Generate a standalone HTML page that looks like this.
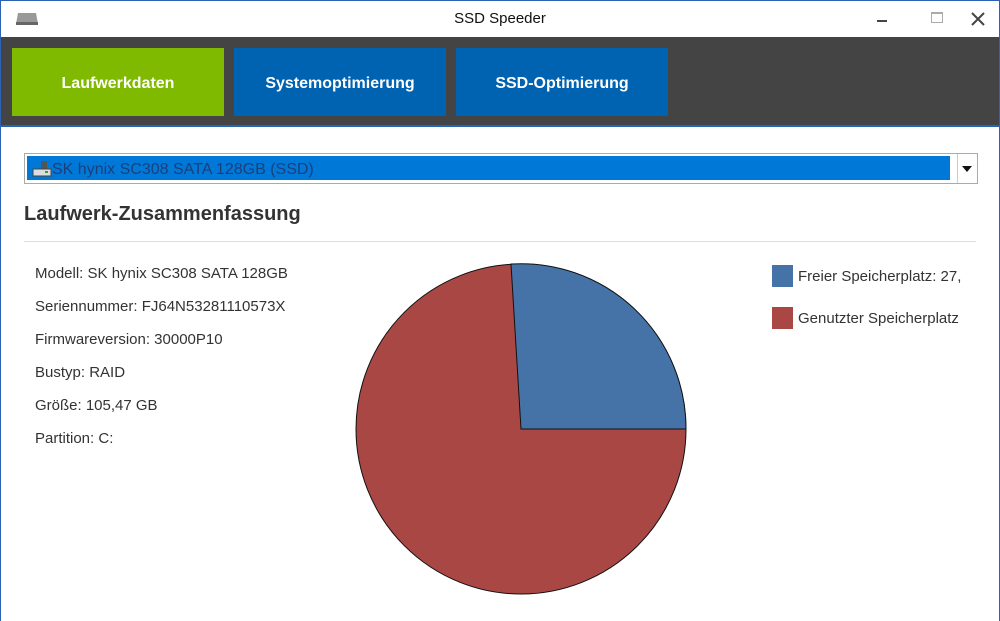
<!DOCTYPE html>
<html><head><meta charset="utf-8"><style>
*{margin:0;padding:0;box-sizing:border-box}
body{width:1000px;height:621px;overflow:hidden;background:#fff;font-family:"Liberation Sans",sans-serif;position:relative}
.frame{position:absolute;inset:0;border:1px solid #2b62b5;border-bottom:none}
.title{position:absolute;left:0;top:0;width:1000px;height:37px;text-align:center;line-height:37px;font-size:15px;color:#111}
.band{position:absolute;left:1px;top:37px;width:998px;height:90px;background:#444;border-bottom:2px solid #2466b4}
.btn{position:absolute;top:11px;height:68px;color:#fff;font-weight:bold;font-size:16px;text-align:center;line-height:72px}
.t{position:absolute;font-size:15px;color:#333;white-space:nowrap}
</style></head><body>
<div class="frame"></div>
<div class="title">SSD Speeder</div>
<svg style="position:absolute;left:15px;top:12px" width="24" height="14"><path d="M3 1h18l2 11H1z" fill="#999"/><rect x="1" y="10" width="22" height="3" fill="#666"/></svg>
<div style="position:absolute;left:877px;top:20px;width:10px;height:1.5px;background:#444"></div>
<div style="position:absolute;left:931px;top:12px;width:12px;height:11px;border:1px solid #aaa;border-top-width:2px"></div>
<svg style="position:absolute;left:971px;top:12px" width="14" height="14"><path d="M1 1L13 13M13 1L1 13" stroke="#444" stroke-width="2"/></svg>
<div class="band">
<div class="btn" style="left:11px;width:212px;background:#7fba00">Laufwerkdaten</div>
<div class="btn" style="left:233px;width:212px;background:#0063b1">Systemoptimierung</div>
<div class="btn" style="left:455px;width:212px;background:#0063b1">SSD-Optimierung</div>
</div>
<div style="position:absolute;left:24px;top:153px;width:954px;height:31px;border:1px solid #aaa;background:#fff"></div>
<div style="position:absolute;left:27px;top:156px;width:923px;height:24px;background:#0078d7"></div>
<div style="position:absolute;left:957px;top:154px;width:1px;height:29px;background:#ccc"></div>
<svg style="position:absolute;left:962px;top:166px" width="10" height="6"><path d="M0 0h10L5 6z" fill="#111"/></svg>
<svg style="position:absolute;left:31px;top:159px" width="22" height="20"><rect x="10" y="2" width="6" height="8" fill="#555"/><rect x="2" y="10" width="18" height="7" fill="#ddd" stroke="#444"/><rect x="14" y="12" width="3" height="2" fill="#2a2"/></svg>
<div class="t" style="left:52px;top:161px;color:#1c3f7a;font-size:16px">SK hynix SC308 SATA 128GB (SSD)</div>
<div class="t" style="left:24px;top:203px;font-size:20px;font-weight:bold;color:#333">Laufwerk-Zusammenfassung</div>
<div style="position:absolute;left:24px;top:241px;width:952px;height:1px;background:#ddd"></div>
<div class="t" style="left:35px;top:265px">Modell: SK hynix SC308 SATA 128GB</div>
<div class="t" style="left:35px;top:298px">Seriennummer: FJ64N53281110573X</div>
<div class="t" style="left:35px;top:331px">Firmwareversion: 30000P10</div>
<div class="t" style="left:35px;top:364px">Bustyp: RAID</div>
<div class="t" style="left:35px;top:397px">Größe: 105,47 GB</div>
<div class="t" style="left:35px;top:430px">Partition: C:</div>
<svg style="position:absolute;left:0;top:0" width="1000" height="621">
<circle cx="521" cy="429" r="165" fill="#a94745" stroke="#111" stroke-width="1"/>
<path d="M521 429L511 264A165 165 0 0 1 686 429Z" fill="#4673a7" stroke="#111" stroke-width="1"/>
</svg>
<div style="position:absolute;left:772px;top:265px;width:21px;height:22px;background:#4673a7"></div>
<div style="position:absolute;left:772px;top:307px;width:21px;height:22px;background:#a94745"></div>
<div style="position:absolute;left:798px;top:268px;width:168px;overflow:hidden" class="t">Freier Speicherplatz: 27,</div>
<div style="position:absolute;left:798px;top:310px;width:168px;overflow:hidden" class="t">Genutzter Speicherplatz</div>
</body></html>
